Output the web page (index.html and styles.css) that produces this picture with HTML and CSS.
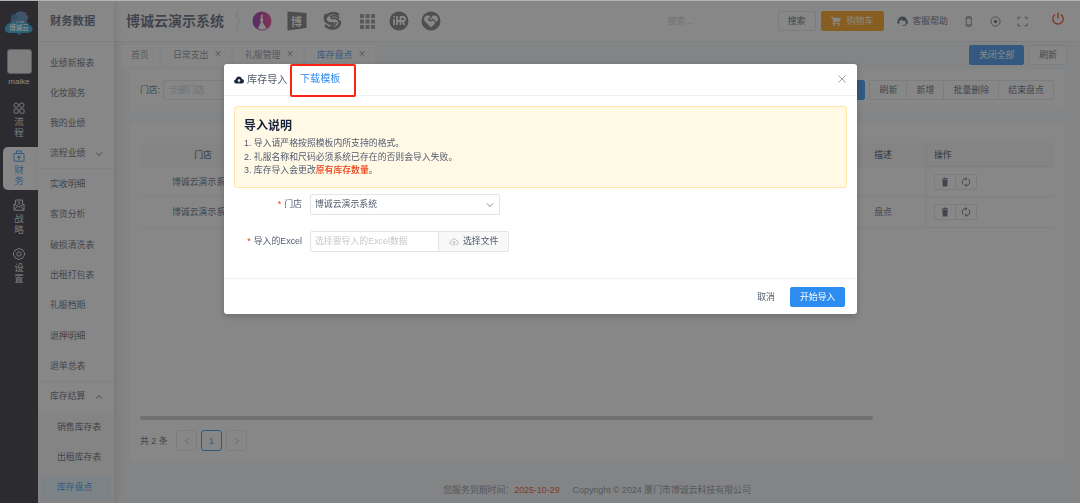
FILE: index.html
```html
<!DOCTYPE html>
<html lang="zh-CN">
<head>
    <meta charset="UTF-8">
    <meta name="viewport" content="width=device-width, initial-scale=1.0">
    <title>库存盘点</title>
    <link rel="stylesheet" href="styles.css">
</head>
<body>
    <div class="layout">
        <nav class="rail">
            <svg class="logo" viewBox="0 0 30 26">
                <path d="M8 16c-2-5 0-9 3-10 2-5 10-5 11 0 3 0 3 3 1 5l-1 7z" fill="#4a86bd"/>
                <circle cx="10" cy="8" r="3" fill="#2f6da5"/>
                <circle cx="22" cy="4" r="1" fill="#d63c3c"/>
                <path d="M12 13l8-1-2 4h-5z" fill="#e9e3dc"/>
                <path d="M6 14c2-2 5-1 6 0 2-1 5-1 7 0 3-2 6 0 6 2 5 1 5 8-1 8h-7l-2 2-2-2H6c-7 0-7-8 0-10z" fill="#16a5d6"/>
                <text x="15" y="21.3" text-anchor="middle" class="logo-text">博诚云</text>
            </svg>
            <div class="avatar"></div>
            <div class="user">maike</div>
            <a class="rail-item">
                <svg viewBox="0 0 12 12"><circle cx="3.2" cy="3.2" r="2.2"/><circle cx="8.8" cy="3.2" r="2.2"/><rect x="1" y="7" width="4.3" height="4.2" rx="1"/><rect x="6.8" y="7" width="4.3" height="4.2" rx="1"/></svg>
                <span>流</span><span>程</span>
            </a>
            <a class="rail-item active">
                <svg viewBox="0 0 12 12"><path d="M1 3.5h10v7.7H1zM3.5 3.5V1h5v2.5M4.3 5.5L6 7l1.700-1.500M4.300 7.500h3.400M6 7v3"/></svg>
                <span>财</span><span>务</span>
            </a>
            <a class="rail-item">
                <svg viewBox="0 0 12 12"><path d="M2.500 5V1h7v4M1 5l5 3.200L11 5v6.200H1zM4.500 3h3M4.500 5h3M1 11l3-3.500M11 11L8 7.500"/></svg>
                <span>战</span><span>略</span>
            </a>
            <a class="rail-item">
                <svg viewBox="0 0 12 12"><path d="M4.300 1.200Q6-.2 7.700 1.200L9.800 2Q10.300 3.800 11.500 5v2Q10 8.300 9.800 10L7.700 10.800Q6 12.200 4.300 10.800L2.200 10Q2 8.300.5 7V5Q1.700 3.800 2.200 2z"/><circle cx="6" cy="6" r="2.200"/></svg>
                <span>设</span><span>置</span>
            </a>
        </nav>

        <aside class="menu">
            <h2>财务数据</h2>
            <ul>
                <li>业绩新报表</li>
                <li>化妆服务</li>
                <li>我的业绩</li>
                <li class="group">流程业绩<svg viewBox="0 0 8 8"><path d="M1 2.500l3 3 3-3"/></svg></li>
                <li>实收明细</li>
                <li>客资分析</li>
                <li>破损清洗表</li>
                <li>出租打包表</li>
                <li>礼服档期</li>
                <li>退押明细</li>
                <li class="last">退单总表</li>
                <li>库存结算<svg viewBox="0 0 8 8"><path d="M1 5.500l3-3 3 3"/></svg></li>
            </ul>
            <ul class="sub">
                <li>销售库存表</li>
                <li>出租库存表</li>
                <li class="current">库存盘点</li>
            </ul>
        </aside>

        <main>
            <header class="topbar">
                <h1>博诚云演示系统</h1>
                <svg class="sep" viewBox="0 0 6 20"><path d="M1 0v7l3 3-3 3v7"/></svg>
                <div class="apps">
                    <svg viewBox="0 0 20 20"><defs><linearGradient id="pink" x2="1" y2="0"><stop stop-color="#7d1fb0"/><stop offset="1" stop-color="#f0307c"/></linearGradient></defs><circle cx="10" cy="10" r="9.500" fill="url(#pink)"/><path d="M9.500 3.500c2-.5 2 2 .8 2.500l1 3-.8 2 4 6.500c-3 1.500-6 1.500-8.500 0l3-6.500-1-2 1-2.500z" fill="#fff"/></svg>
                    <svg viewBox="0 0 20 20"><path d="M.500.500l19 1.500v15L.500 19.500z" fill="#6e6e6e"/><text x="9.500" y="14.500" text-anchor="middle" class="app-text">博</text></svg>
                    <svg viewBox="0 0 20 20" stroke="#6e6e6e" stroke-width="2.600"><path d="M17 4C10-1 1 5 4 11M4 3c-3 7 2 11 8 9M3 14c5 6 15 4 15-4"/><path d="M9 8c4-2 8 0 8 3M8 6c3-2 7-2 9 1M8 15c3 1 6-1 6-4" stroke-width="1.800"/></svg>
                    <svg viewBox="0 0 20 20"><path d="M3 3h4v4H3zM8.500 3h4v4h-4zM14 3h4v4h-4zM3 8.500h4v4H3zM8.500 8.500h4v4h-4zM14 8.500h4v4h-4zM3 14h4v4H3zM8.500 14h4v4h-4zM14 14h4v4h-4z" fill="#8f8f8f"/></svg>
                    <svg viewBox="0 0 20 20"><circle cx="10" cy="10" r="9.500" fill="#747474"/><path d="M5 8v6M5 5v1.500M8 5v9M8 10h3.500M11.500 14V6h2.300c3 0 3 4 0 4h-2.300M13.500 10l2 4" stroke="#fff" stroke-width="1.800"/></svg>
                    <svg viewBox="0 0 20 20"><circle cx="10" cy="10" r="9.500" fill="#747474"/><path d="M10 16.500L3.800 10.300c-2.500-3.500 2-8 6.200-4.300 4.200-3.700 8.700.8 6.200 4.300z" fill="#fff"/><path d="M11 5L7.500 8.500c1 2 3 1.500 4-.2l4.500 4" stroke="#747474" stroke-width="1.300"/></svg>
                </div>
                <span class="search">搜索...</span>
                <button class="btn search-btn">搜索</button>
                <button class="btn cart"><svg viewBox="0 0 10 10"><path d="M0 .5h1.700l.5 1.200H10L8.300 5.800H3.600l-.5 1h6v1H2.200c-.8 0-.8-.9-.5-1.300l.7-1.100L1 1.500H0z" fill="#fff"/><circle cx="3.200" cy="9" r=".9" fill="#fff"/><circle cx="8" cy="9" r=".9" fill="#fff"/></svg>购物车</button>
                <span class="help"><svg viewBox="0 0 12 12"><path d="M1 5c.5-6 9.500-6 10 0l.8.500v2.500L10.500 9 9 11H6v-1h2.500l1-1.200V5.500C7 5.500 5.500 5 4.500 3.500 4 5 3.300 5.500 2.500 5.700V9L.5 8V5.500z" fill="#515a6e"/></svg>客服帮助</span>
                <svg class="ti phone" viewBox="0 0 12 12"><rect x="3.500" y=".8" width="5.500" height="10.400" rx="1"/><path d="M3.500 2.300H9M3.500 9.700H9"/></svg>
                <svg class="ti target" viewBox="0 0 12 12"><circle cx="6" cy="6" r="5"/><circle cx="6" cy="6" r="1.500" fill="#515a6e"/></svg>
                <svg class="ti full" viewBox="0 0 12 12"><path d="M1 4V1.300h2.700M8.300 1.300H11V4M11 8v2.700H8.300M3.700 10.700H1V8"/></svg>
                <svg class="power" viewBox="0 0 14 14"><path d="M4 2.600a5.200 5.200 0 1 0 6 0M7 .6v6"/></svg>
            </header>

            <div class="tabs">
                <span class="tab home">首页</span>
                <span class="tab">日常支出<i>×</i></span>
                <span class="tab">礼服管理<i>×</i></span>
                <span class="tab on">库存盘点<i>×</i></span>
                <button class="btn primary close-all">关闭全部</button>
                <button class="btn reload">刷新</button>
            </div>

            <section class="card filter">
                <label>门店:</label>
                <span class="input">全部门店</span>
                <button class="btn primary query">查询</button>
                <div class="group-btns">
                    <button>刷新</button><button>新增</button><button>批量删除</button><button>结束盘点</button>
                </div>
            </section>

            <section class="card content">
                <div class="table">
                    <div class="row head"><span>门店</span><span></span><span>描述</span><span class="op">操作</span></div>
                    <div class="row">
                        <span>博诚云演示系统</span><span></span><span></span>
                        <span class="op"><b class="icons"><svg viewBox="0 0 10 10"><path d="M2 1.300h2L4.400.600h1.200L6 1.300h2v1H2zM2.300 2.800h5.400L7.300 9.500H2.700z"/></svg><svg viewBox="0 0 10 10" class="line"><path d="M3 1.800a3.800 3.800 0 0 0-.7 5.800M7 8.200a3.800 3.800 0 0 0 .7-5.800M3 1.800h3M7 8.200H4M6 1.800L4.500.5M6 1.800L4.500 3.200M4 8.200l1.500-1.400M4 8.200l1.500 1.300"/></svg></b></span>
                    </div>
                    <div class="row">
                        <span>博诚云演示系统</span><span></span><span>盘点</span>
                        <span class="op"><b class="icons"><svg viewBox="0 0 10 10"><path d="M2 1.300h2L4.400.600h1.200L6 1.300h2v1H2zM2.300 2.800h5.400L7.300 9.500H2.700z"/></svg><svg viewBox="0 0 10 10" class="line"><path d="M3 1.800a3.800 3.800 0 0 0-.7 5.800M7 8.200a3.800 3.800 0 0 0 .7-5.800M3 1.800h3M7 8.200H4M6 1.800L4.500.5M6 1.800L4.500 3.200M4 8.200l1.500-1.400M4 8.200l1.500 1.300"/></svg></b></span>
                    </div>
                </div>
                <div class="scrollbar"></div>
                <div class="pager">
                    <span>共 2 条</span>
                    <a><svg viewBox="0 0 8 8"><path d="M5.500 1l-3 3 3 3"/></svg></a>
                    <a class="on">1</a>
                    <a><svg viewBox="0 0 8 8"><path d="M2.500 1l3 3-3 3"/></svg></a>
                </div>
            </section>

            <footer>您服务到期时间：<em>2025-10-29</em><span>Copyright © 2024 厦门市博诚云科技有限公司</span></footer>
        </main>
    </div>

    <div class="mask"></div>

    <div class="modal">
        <div class="modal-head">
            <svg class="cloud" viewBox="0 0 10 8"><path d="M2.500 7.500C-.600 7.500-.500 3.800 2 3.300 2.300-.3 7.200-.3 7.800 3c3 .2 2.800 4.500 0 4.500z" fill="#17233d"/><path d="M5 2.800L3.300 4.700h1.100v1.600h1.200V4.700h1.100z" fill="#fff"/></svg>
            <span class="modal-title">库存导入</span>
            <a class="download">下载模板</a>
            <svg class="close" viewBox="0 0 8 8"><path d="M.5.5l7 7M7.500.5l-7 7"/></svg>
        </div>
        <div class="modal-body">
            <div class="alert">
                <h3>导入说明</h3>
                <p>1. 导入请严格按照模板内所支持的格式。</p>
                <p>2. 礼服名称和尺码必须系统已存在的否则会导入失败。</p>
                <p>3. 库存导入会更改<strong>原有库存数量</strong>。</p>
            </div>
            <div class="field">
                <label><i>*</i>门店</label>
                <div class="select">博诚云演示系统<svg viewBox="0 0 8 8"><path d="M1 2.500l3 3 3-3"/></svg></div>
            </div>
            <div class="field">
                <label><i>*</i>导入的Excel</label>
                <div class="file">选择要导入的Excel数据</div>
                <div class="choose"><svg viewBox="0 0 10 8"><path d="M3.500 6.500h-1C.2 6.500.2 3.500 2.300 3.300 2.500.3 7 .2 7.600 3c2.400.1 2.300 3.500 0 3.500H6.500M5 7.800V3.500M3.500 5L5 3.500 6.500 5"/></svg>选择文件</div>
            </div>
        </div>
        <div class="modal-foot">
            <span>取消</span>
            <button class="btn submit">开始导入</button>
        </div>
    </div>
</body>
</html>
```
FILE: styles.css
```css
* {
    box-sizing: border-box;
}

body {
    margin: 0;
    height: 503px;
    overflow: hidden;
    font-family: "Liberation Sans", "Noto Sans CJK SC", sans-serif;
    font-size: 8.9px;
    line-height: 12px;
    color: #515a6e;
    background: #f5f7f9;
}

h1, h2, h3, p, ul {
    margin: 0;
    padding: 0;
}

ul {
    list-style: none;
}

i, em {
    font-style: normal;
}

svg {
    flex-shrink: 0;
    fill: none;
    stroke-linejoin: round;
}

button {
    font: inherit;
    color: inherit;
    padding: 0;
}

.layout {
    display: flex;
    height: 503px;
}

/* left rail */
.rail {
    width: 38px;
    flex-shrink: 0;
    background: #1d1a24;
    color: #fff;
    display: flex;
    flex-direction: column;
    align-items: center;
    padding-top: 9px;
}

.logo {
    width: 30px;
    height: 26px;
}

.logo-text {
    font-size: 6.5px;
    font-weight: bold;
    fill: #fff;
}

.avatar {
    width: 25px;
    height: 25px;
    margin-top: 14px;
    background: #e8e8e8;
    border: 1px solid #999;
    border-radius: 3px;
    flex-shrink: 0;
}

.user {
    margin-top: 2px;
    font-size: 8px;
}

.rail-item {
    display: flex;
    flex-direction: column;
    align-items: center;
    align-self: flex-end;
    width: 35px;
    height: 43px;
    margin-top: 6px;
    padding-top: 3px;
    padding-right: 3px;
    color: #ddd;
    font-size: 9.5px;
    line-height: 11px;
    border-radius: 5px 0 0 5px;
    flex-shrink: 0;
}

.user + .rail-item {
    margin-top: 11px;
}

.rail-item svg {
    width: 12px;
    height: 12px;
    margin-bottom: 2px;
    stroke: currentColor;
    stroke-width: 1;
}

.rail-item.active {
    margin-top: 5px;
    background: #fff;
    color: #2d8cf0;
}

/* second level menu */
.menu {
    width: 76px;
    flex-shrink: 0;
    background: #fff;
    box-shadow: 2px 0 8px rgba(0, 0, 0, 0.12);
    position: relative;
}

.menu h2 {
    height: 42px;
    padding-left: 12px;
    border-bottom: 1px solid #eee;
    font-size: 11.3px;
    line-height: 43px;
}

.menu ul {
    padding-top: 6px;
}

.menu li {
    height: 30.35px;
    padding-left: 12px;
    line-height: 31px;
    display: flex;
    align-items: center;
}

.menu li svg {
    width: 8px;
    height: 8px;
    margin-left: 9px;
    stroke: #515a6e;
}

.menu li.group,
.menu li.last {
    border-bottom: 1px solid #efefef;
}

.menu .sub {
    height: 92px;
    padding-top: 0;
    background: #f7f7f7;
}

.menu .sub li {
    padding-left: 19px;
}

.menu .sub .current {
    height: 24px;
    margin: 3px 3px 0;
    padding-left: 16px;
    border-radius: 3px;
    background: #e4f6fc;
    color: #2d8cf0;
}

main {
    flex: 1;
    min-width: 0;
}

/* top bar */
.topbar {
    display: flex;
    align-items: center;
    height: 42px;
    padding: 1px 14px 0 12px;
    background: #fff;
    border-bottom: 1px solid #e8eaec;
}

.topbar h1 {
    width: 98px;
    font-size: 14px;
    line-height: 20px;
    white-space: nowrap;
}

.sep {
    width: 6px;
    height: 20px;
    margin-left: 12px;
    stroke: #ddd;
}

.apps {
    display: flex;
    gap: 15px;
    margin-left: 10px;
}

.apps svg {
    width: 20px;
    height: 20px;
}

.apps svg:nth-child(n+5) {
    margin-left: -3px;
}

.app-text {
    font-size: 11px;
    font-weight: bold;
    fill: #fff;
}

.search {
    width: 110px;
    margin-left: auto;
    color: #c5c8ce;
}

.btn {
    height: 20px;
    padding: 0 9px;
    border: 1px solid #e4e6e9;
    border-radius: 2px;
    background: #fff;
    line-height: 18px;
    white-space: nowrap;
}

.search-btn {
    width: 38px;
}

.btn.cart {
    display: flex;
    align-items: center;
    justify-content: center;
    gap: 6px;
    width: 63px;
    margin-left: 5px;
    padding: 0;
    background: #ff9900;
    border-color: #ff9900;
    color: #fff;
}

.cart svg {
    width: 10px;
    height: 10px;
}

.help {
    display: flex;
    align-items: center;
    gap: 5px;
    margin-left: 13px;
}

.help svg,
.ti {
    width: 11px;
    height: 11px;
}

.ti {
    stroke: #515a6e;
    stroke-width: 0.9;
}

.phone {
    margin-left: 15px;
}

.target,
.full {
    margin-left: 16px;
}

.power {
    width: 14px;
    height: 14px;
    margin: -4px 1px 0 23px;
    stroke: #ed3f14;
    stroke-width: 1.4;
}

/* opened pages */
.tabs {
    display: flex;
    align-items: center;
    height: 27px;
    padding: 0 13px 1px 7px;
    gap: 4px;
}

.tab {
    width: 68px;
    height: 21px;
    padding-left: 10px;
    background: #fff;
    border-radius: 2px;
    line-height: 21px;
    color: #808695;
    white-space: nowrap;
}

.tab.home {
    width: 38px;
}

.tab i {
    margin-left: 6px;
    font-size: 12px;
    line-height: 10px;
    color: #999;
}

.tab.on {
    color: #2d8cf0;
}

.btn.primary {
    background: #2d8cf0;
    border-color: #2d8cf0;
    color: #fff;
}

.close-all {
    width: 55px;
    margin-left: auto;
    margin-right: 1px;
}

.reload {
    width: 38px;
}

.card {
    width: 934px;
    margin-left: 16px;
    background: #fff;
    border-radius: 3px;
}

.filter {
    display: flex;
    align-items: center;
    height: 42px;
    padding: 0 10px;
}

.filter .input {
    width: 110px;
    height: 20px;
    margin-left: 3px;
    padding-left: 5px;
    border: 1px solid #e4e6e9;
    border-radius: 2px;
    line-height: 18px;
    color: #c5c8ce;
}

.query {
    margin-left: auto;
}

.group-btns {
    display: flex;
    height: 20px;
    margin-left: 4px;
    border: 1px solid #e4e6e9;
    border-radius: 2px;
}

.group-btns button {
    padding: 0 9.15px;
    border: 0;
    background: none;
    line-height: 18px;
}

.group-btns button + button {
    border-left: 1px solid #e4e6e9;
}

.content {
    height: 338px;
    margin-top: 12px;
    padding: 20px 10px 0;
}

.table {
    height: 273px;
}

.row {
    display: grid;
    grid-template-columns: 126px 1fr 88px 127px;
    height: 30.4px;
    border-bottom: 1px solid #eef0f2;
    line-height: 30px;
    text-align: center;
}

.row.head {
    height: 24px;
    background: #f8f8f9;
    line-height: 24px;
    font-weight: 500;
}

.op {
    display: flex;
    align-items: center;
    padding-left: 7px;
    box-shadow: -2px 0 3px rgba(0, 0, 0, 0.05);
}

.icons {
    display: flex;
    border: 1px solid #e4e6e9;
    border-radius: 2px;
}

.icons svg {
    width: 20px;
    height: 14px;
    padding: 2px 5px;
    fill: #515a6e;
}

.icons .line {
    width: 21px;
    border-left: 1px solid #e4e6e9;
    stroke: #515a6e;
    fill: none;
}

.scrollbar {
    width: 733px;
    height: 4px;
    border-radius: 2px;
    background: #c4c6ca;
}

.pager {
    display: flex;
    align-items: center;
    gap: 4px;
    margin-top: 10px;
}

.pager span {
    width: 32px;
    line-height: 10px;
    white-space: nowrap;
}

.pager a {
    display: flex;
    align-items: center;
    justify-content: center;
    width: 21px;
    height: 21px;
    border: 1px solid #e4e6e9;
    border-radius: 3px;
}

.pager a.on {
    border-color: #2d8cf0;
    color: #2d8cf0;
}

.pager svg {
    width: 8px;
    height: 8px;
    stroke: #aaa;
}

footer {
    margin-top: 23px;
    text-align: center;
    color: #808695;
}

footer em {
    color: #ed3f14;
}

footer span {
    margin-left: 13px;
}

.mask {
    position: fixed;
    inset: 0;
    background: rgba(55, 55, 55, 0.6);
    background-clip: padding-box;
    border-top: 1px solid #b0b4b4;
}

/* import dialog */
.modal {
    position: absolute;
    left: 224px;
    top: 64px;
    width: 633px;
    height: 250px;
    background: #fff;
    border-radius: 3px;
    box-shadow: 0 2px 6px rgba(0, 0, 0, 0.2);
}

.modal-head {
    display: flex;
    align-items: center;
    height: 32px;
    padding: 0 11px 0 10px;
    border-bottom: 1px solid #f0f1f3;
    font-size: 10.1px;
}

.cloud {
    width: 10px;
    height: 8px;
    margin-right: 3px;
}

.modal-title {
    width: 43px;
    line-height: 10px;
    white-space: nowrap;
}

.download {
    align-self: flex-start;
    width: 66px;
    height: 33px;
    padding-left: 8px;
    border: 2px solid #fa2314;
    border-radius: 2px;
    line-height: 26px;
    color: #2d8cf0;
    flex-shrink: 0;
}

.close {
    width: 8px;
    height: 8px;
    margin-left: auto;
    margin-bottom: 1px;
    stroke: #999;
    stroke-width: 0.9;
}

.modal-body {
    height: 182px;
    padding: 10px 10px 0;
}

.alert {
    height: 82px;
    padding: 11px 9px 0;
    border: 1px solid #ffe6a8;
    border-radius: 3px;
    background: #fff9e6;
    font-size: 8.85px;
    line-height: 13.6px;
}

.alert h3 {
    margin-bottom: 2px;
    font-size: 12px;
    line-height: 17px;
    color: #17233d;
}

.alert strong {
    font-weight: 500;
    color: #ed3f14;
}

.field {
    display: flex;
    height: 21px;
    margin-top: 6px;
    line-height: 21px;
}

.field + .field {
    margin-top: 16px;
}

.field label {
    width: 76px;
    padding-right: 8px;
    text-align: right;
    white-space: nowrap;
}

.field label i {
    margin-right: 3px;
    color: #ed3f14;
}

.select,
.file,
.choose {
    border: 1px solid #e2e4e8;
    border-radius: 2px;
    padding: 0 5px 0 4px;
    line-height: 19px;
}

.select {
    display: flex;
    align-items: center;
    justify-content: space-between;
    width: 190px;
}

.select svg {
    width: 8px;
    height: 8px;
    stroke: #808695;
}

.file {
    width: 129px;
    border-radius: 2px 0 0 2px;
    color: #c5c8ce;
    white-space: nowrap;
}

.choose {
    display: flex;
    align-items: center;
    width: 71px;
    margin-left: -1px;
    padding-left: 10px;
    border-radius: 0 2px 2px 0;
    background: #f8f8f9;
}

.choose svg {
    width: 10px;
    height: 8px;
    margin-right: 4px;
    stroke: #aaa;
    stroke-width: 0.7;
}

.modal-foot {
    display: flex;
    align-items: center;
    justify-content: flex-end;
    gap: 15px;
    height: 36px;
    padding-right: 12px;
    border-top: 1px solid #f0f1f3;
}

.submit {
    width: 55px;
    background: #2d8cf0;
    border-color: #2d8cf0;
    color: #fff;
}
```
